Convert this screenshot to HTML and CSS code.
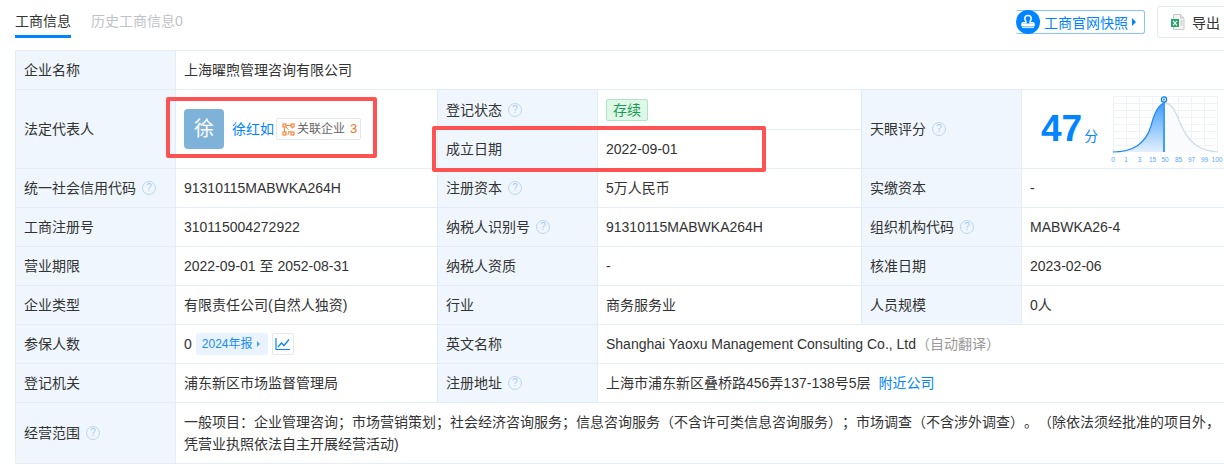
FILE: index.html
```html
<!DOCTYPE html>
<html lang="zh-CN">
<head>
<meta charset="utf-8">
<title>工商信息</title>
<link rel="stylesheet" href="styles.css">
</head>
<body>
<div class="page">
  <header class="top">
    <nav class="tabs">
      <a class="tab active">工商信息</a>
      <a class="tab muted">历史工商信息0</a>
    </nav>
    <div class="actions">
      <a class="snapshot">
        <span class="stamp">
          <svg width="24" height="24" viewBox="0 0 24 24"><circle cx="12" cy="12" r="12" fill="#0084ff"/><path d="M12 5.500a3.200 3.200 0 0 1 3.200 3.200c0 1.300-.9 1.900-1.100 2.800-.1.400-.1.800 0 1.200h2.600c.8 0 1.300.5 1.300 1.300v1.500H6v-1.500c0-.8.5-1.300 1.300-1.300h2.600c.1-.4.1-.8 0-1.200-.2-.9-1.100-1.500-1.100-2.800A3.200 3.200 0 0 1 12 5.500z" fill="none" stroke="#fff" stroke-width="1.500"/><path d="M6 16.500h12v1.600H6z" fill="#cfe6ff"/><path d="M6 13.500h12v2.500H6z" fill="#fff"/></svg>
        </span>
        <span class="snap-text">工商官网快照</span>
        <i class="caret"></i>
      </a>
      <a class="export">
        <svg width="14" height="16" viewBox="0 0 14 16"><path d="M2.500.5h7l3.500 3.500v11.500h-10.500z" fill="#f4f4f4" stroke="#c9c9c9"/><path d="M9.500.5v3.500h3.500" fill="#e2e2e2" stroke="#c9c9c9"/><rect x="0" y="5" width="8" height="8" fill="#22a565"/><path d="M2 6.800l4 4.500M6 6.800l-4 4.500" stroke="#fff" stroke-width="1.200"/><path d="M9.500 7h2M9.500 9h2M9.500 11h2" stroke="#bdbdbd"/></svg>
        <span>导出</span>
      </a>
    </div>
  </header>

  <table class="info">
    <colgroup>
      <col class="c-l"><col class="c-v1"><col class="c-l"><col class="c-v2"><col class="c-l"><col class="c-v3">
    </colgroup>
    <tr>
      <th>企业名称</th>
      <td colspan="5">上海曜煦管理咨询有限公司</td>
    </tr>
    <tr class="r40">
      <th rowspan="2">法定代表人</th>
      <td rowspan="2">
        <div class="boss">
          <span class="avatar">徐</span>
          <a class="link">徐红如</a>
          <span class="rel">
            <svg width="13" height="13" viewBox="0 0 13 13" fill="none" stroke="#f5883c"><rect x="1" y="1" width="3" height="3" stroke-width="1.200"/><rect x="9" y="1" width="3" height="3" stroke-width="1.200"/><rect x="1" y="9" width="3" height="3" stroke-width="1.200"/><rect x="9" y="9" width="3" height="3" stroke-width="1.200"/><path d="M4 2.500h5M2.500 4v5M10.500 4v1.500M4 4l2.500 2.500"/><path d="M6 12l.5-3.500 2.500.5"/></svg>
            <span class="rel-t">关联企业</span><b>3</b>
          </span>
        </div>
      </td>
      <th>登记状态<i class="q">?</i></th>
      <td><span class="status">存续</span></td>
      <th rowspan="2">天眼评分<i class="q">?</i></th>
      <td rowspan="2" class="score-cell">
        <div class="score">
          <span class="num">47</span><span class="unit">分</span>
          <svg class="chart" width="114" height="72" viewBox="0 0 114 72">
            <defs>
              <linearGradient id="fill" x1="0" y1="0" x2="0" y2="1">
                <stop offset="0" stop-color="#3f9dfb"/>
                <stop offset="1" stop-color="#e3f0fe"/>
              </linearGradient>
            </defs>
            <path class="grid" d="M2 3.500h105M2 10.500h105M2 17.500h105M2 24.500h105M2 31.500h105M2 38.500h105M2 45.500h105M2 52.500h105M2.500 3v56M15.500 3v56M28.500 3v56M41.500 3v56M54.500 3v56M67.500 3v56M80.500 3v56M93.500 3v56M106.500 3v56"/>
            <path d="M53 10C59 9 63 15 67 25C72 38 78 49 88 54C94 57 100 58.500 107 59H53z" fill="#fafbfd"/>
            <path d="M53 10C59 9 63 15 67 25C72 38 78 49 88 54C94 57 100 58.500 107 59" fill="none" stroke="#cddaea" stroke-width="1.200"/>
            <path d="M2 59C10 59 18 58 26 53C32 49 37 43 40 33C43 21 47 12 53 10V59z" fill="url(#fill)"/>
            <path d="M2 59C10 59 18 58 26 53C32 49 37 43 40 33C43 21 47 12 53 10" fill="none" stroke="#1a86f5" stroke-width="1.200"/>
            <path d="M53 9v50" stroke="#3f9dfb" stroke-width="2"/>
            <circle cx="53" cy="6.500" r="2.600" fill="#fff" stroke="#0a7ff0" stroke-width="1.300"/>
            <circle cx="53" cy="6.500" r=".9" fill="#0a7ff0"/>
            <g class="ticks">
              <text x="2" y="69">0</text><text x="15" y="69">1</text><text x="28.500" y="69">3</text><text x="41.500" y="69">15</text><text x="54" y="69">50</text><text x="67.500" y="69">85</text><text x="80.500" y="69">97</text><text x="93.500" y="69">99</text><text x="106" y="69">100</text>
            </g>
          </svg>
        </div>
      </td>
    </tr>
    <tr>
      <th>成立日期</th>
      <td>2022-09-01</td>
    </tr>
    <tr>
      <th>统一社会信用代码<i class="q">?</i></th>
      <td>91310115MABWKA264H</td>
      <th>注册资本<i class="q">?</i></th>
      <td>5万人民币</td>
      <th>实缴资本</th>
      <td>-</td>
    </tr>
    <tr>
      <th>工商注册号</th>
      <td>310115004272922</td>
      <th>纳税人识别号<i class="q">?</i></th>
      <td>91310115MABWKA264H</td>
      <th>组织机构代码<i class="q">?</i></th>
      <td>MABWKA26-4</td>
    </tr>
    <tr>
      <th>营业期限</th>
      <td>2022-09-01 至 2052-08-31</td>
      <th>纳税人资质</th>
      <td>-</td>
      <th>核准日期</th>
      <td>2023-02-06</td>
    </tr>
    <tr>
      <th>企业类型</th>
      <td>有限责任公司(自然人独资)</td>
      <th>行业</th>
      <td>商务服务业</td>
      <th>人员规模</th>
      <td>0人</td>
    </tr>
    <tr>
      <th>参保人数</th>
      <td>
        <div class="staff">
          <span>0</span>
          <a class="report">2024年报<i class="caret small"></i></a>
          <a class="trend"><svg width="16" height="14" viewBox="0 0 16 14" fill="none" stroke="#0084ff" stroke-width="1.200"><path d="M1 1v11.500h14"/><path d="M3 10l3.500-4 2.500 2.500 5-6"/></svg></a>
        </div>
      </td>
      <th>英文名称</th>
      <td colspan="3">Shanghai Yaoxu Management Consulting Co., Ltd<span class="auto">（自动翻译）</span></td>
    </tr>
    <tr>
      <th>登记机关</th>
      <td>浦东新区市场监督管理局</td>
      <th>注册地址<i class="q">?</i></th>
      <td colspan="3">上海市浦东新区叠桥路456弄137-138号5层<a class="link near">附近公司</a></td>
    </tr>
    <tr class="r61">
      <th>经营范围<i class="q">?</i></th>
      <td colspan="5" class="scope">一般项目：企业管理咨询；市场营销策划；社会经济咨询服务；信息咨询服务（不含许可类信息咨询服务）；市场调查（不含涉外调查）。（除依法须经批准的项目外，<br>凭营业执照依法自主开展经营活动)</td>
    </tr>
  </table>

  <div class="mark mark-a"></div>
  <div class="mark mark-b"></div>
</div>
</body>
</html>
```

FILE: styles.css
```css
* { box-sizing: border-box; }
html, body { margin: 0; padding: 0; background: #fff; }
body {
  font-family: "Liberation Sans", "Noto Sans CJK SC", sans-serif;
  font-size: 14px;
  color: #333;
  overflow: hidden;
  height: 475px;
  text-spacing-trim: space-all;
}
.page { position: relative; width: 1240px; padding-left: 15px; }

.top { display: flex; justify-content: space-between; align-items: flex-start; height: 50px; }
.tabs { display: flex; gap: 20px; }
.tab { height: 38px; padding-top: 13px; line-height: 16px; color: #333; }
.tab.active { border-bottom: 3px solid #0084ff; color: #333; }
.tab.muted { color: #bfc3c9; }

.actions { display: flex; align-items: flex-start; gap: 12px; width: 224px; padding-top: 6px; }
.snapshot {
  display: flex; align-items: center;
  width: 129px; height: 24px; margin-top: 4px;
  border: 1px solid #88c3fb; border-radius: 2px 3px 3px 2px; border-left: 0;
  color: #0084ff;
}
.stamp { display: block; width: 24px; height: 24px; margin-top: -1px; margin-bottom: -1px; }
.stamp svg { display: block; }
.snap-text { margin-left: 4px; }
.caret {
  display: inline-block; width: 0; height: 0; margin-left: 4px;
  border-left: 4px solid #0084ff; border-top: 4px solid transparent; border-bottom: 4px solid transparent;
}
.caret.small { border-left-color: #4aa3fb; border-top-width: 3.500px; border-bottom-width: 3.500px; border-left-width: 3.500px; margin-left: 4px; }
.export {
  display: flex; align-items: center; gap: 7px;
  width: 80px; height: 32px; padding-left: 13px;
  border: 1px solid #e3e8f0; border-radius: 3px;
  color: #333;
}
.export svg { display: block; }

.info { border-collapse: collapse; table-layout: fixed; width: 1225px; }
.c-l { width: 160px; }
.c-v1 { width: 262px; }
.c-v2 { width: 264px; }
.c-v3 { width: 219px; }
.info tr { height: 39px; }
.info tr.r40 { height: 40px; }
.info tr.r61 { height: 61px; }
.info th, .info td {
  border: 1px solid #e4edf6;
  padding: 0 8px;
  font-weight: 400;
  text-align: left;
  line-height: 22px;
  vertical-align: middle;
}
.info th { background: #eff6fd; }

.q {
  display: inline-block; width: 14px; height: 14px; margin: 4px 0 0 6px;
  border: 1.500px solid #bcd6f0; border-radius: 50%;
  color: #a9cbec; font-style: normal; font-size: 10px; line-height: 11px; text-align: center;
  vertical-align: top;
}

.boss { display: flex; align-items: center; }
.avatar {
  display: flex; align-items: center; justify-content: center;
  width: 40px; height: 40px; border-radius: 4px;
  background: #7fb2d9; color: #fff; font-size: 20px;
}
.link { color: #0084ff; }
.boss .link { margin-left: 8px; }
.rel {
  display: flex; align-items: center; white-space: nowrap;
  height: 22px; width: 85px; margin-left: 2px; padding-left: 5px;
  border: 1px solid #e3e8f0; border-radius: 2px;
  font-size: 12px; color: #666;
}
.rel svg { display: block; flex: none; }
.rel-t { margin-left: 2px; }
.rel b { margin-left: 5px; font-weight: 400; font-size: 13px; color: #f5711d; }

.status {
  display: inline-block; height: 22px; line-height: 20px; padding: 0 6px;
  background: #dff7e7; border: 1px solid #aee6c3; border-radius: 2px; color: #1a9a55;
  vertical-align: middle;
}

.score { display: flex; align-items: center; }
.info .score-cell { padding: 0; }
.num { margin-left: 19px; font-size: 37px; font-weight: 700; line-height: 40px; color: #0084ff; }
.unit { margin-left: 2px; margin-top: 14px; color: #0084ff; }
.chart { display: block; margin-left: 13px; }
.grid { stroke: #eef3f9; stroke-width: 1; fill: none; }
.ticks text { font-size: 6.500px; fill: #57a8f6; text-anchor: middle; font-family: "Liberation Sans", sans-serif; }

.staff { display: flex; align-items: center; }
.report {
  display: flex; align-items: center;
  width: 72px; height: 22px; margin-left: 4px; padding-left: 6px;
  background: #e9f3fd; border-radius: 2px; color: #1a8cf5; font-size: 12px;
}
.trend {
  display: flex; align-items: center; justify-content: center;
  width: 22px; height: 22px; margin-left: 4px;
  border: 1px solid #e3e8f0; border-radius: 2px;
}
.trend svg { display: block; }
.auto { color: #999; }
.near { margin-left: 8px; }
.scope { white-space: nowrap; }

.mark { position: absolute; border: 4px solid #ff5252; border-radius: 2px; pointer-events: none; }
.mark-a { left: 166px; top: 97px; width: 211px; height: 61px; }
.mark-b { left: 432px; top: 126px; width: 334px; height: 46px; }
```
